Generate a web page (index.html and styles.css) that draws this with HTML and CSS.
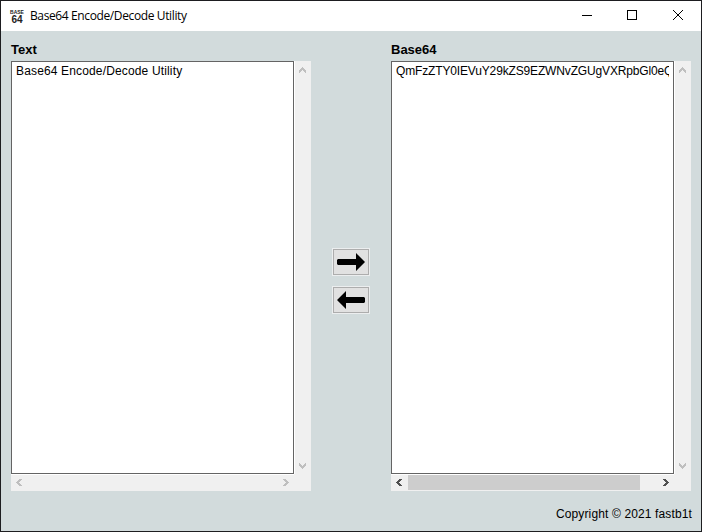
FILE: index.html
```html
<!DOCTYPE html>
<html lang="en">
<head>
<meta charset="utf-8">
<title>Base64 Encode/Decode Utility</title>
<link rel="stylesheet" href="styles.css">
</head>
<body>
<div class="window">
  <header class="titlebar">
    <div class="app-icon"><span class="icon-top">BASE</span><span class="icon-bottom">64</span></div>
    <h1 class="title">Base64 Encode/Decode Utility</h1>
    <svg class="controls" width="102" height="29" viewBox="0 0 102 29" shape-rendering="crispEdges">
      <path d="M0 14.5h10M45.5 9.5h9v9h-9z"/>
      <path class="close" d="M91 9l10 10M101 9l-10 10"/>
    </svg>
  </header>
  <main class="content">
    <section class="pane">
      <h2 class="label">Text</h2>
      <div class="editor">
        <div class="field"><span class="value plain">Base64 Encode/Decode Utility</span></div>
        <div class="vbar">
          <svg class="chev" width="7" height="6" viewBox="0 0 7 6"><path d="M3 0h1v1h1v1h1v1h1v3h-1v-1h-1v-1h-1v-1h-1v1h-1v1h-1v1h-1v-3h1v-1h1v-1h1z"/></svg>
          <svg class="chev" width="7" height="6" viewBox="0 0 7 6"><path d="M3 6h1v-1h1v-1h1v-1h1v-3h-1v1h-1v1h-1v1h-1v-1h-1v-1h-1v-1h-1v3h1v1h1v1h1z"/></svg>
        </div>
        <div class="hbar">
          <svg class="chev" width="6" height="7" viewBox="0 0 6 7"><path d="M0 3v1h1v1h1v1h1v1h3v-1h-1v-1h-1v-1h-1v-1h1v-1h1v-1h1v-1h-3v1h-1v1h-1v1z"/></svg>
          <svg class="chev" width="6" height="7" viewBox="0 0 6 7"><path d="M6 3v1h-1v1h-1v1h-1v1h-3v-1h1v-1h1v-1h1v-1h-1v-1h-1v-1h-1v-1h3v1h1v1h1v1z"/></svg>
        </div>
        <div class="corner"></div>
      </div>
    </section>
    <div class="actions">
      <button class="convert" aria-label="Encode"><svg width="28" height="18" viewBox="0 0 28 18"><path d="M1 6h18V0l9 9-9 9v-6H1l-1-1V7z"/></svg></button>
      <button class="convert" aria-label="Decode"><svg width="28" height="18" viewBox="0 0 28 18"><path d="M27 6H9V0L0 9l9 9v-6h18l1-1V7z"/></svg></button>
    </div>
    <section class="pane">
      <h2 class="label">Base64</h2>
      <div class="editor">
        <div class="field"><span class="value encoded">QmFzZTY0IEVuY29kZS9EZWNvZGUgVXRpbGl0eQ==</span></div>
        <div class="vbar">
          <svg class="chev" width="7" height="6" viewBox="0 0 7 6"><path d="M3 0h1v1h1v1h1v1h1v3h-1v-1h-1v-1h-1v-1h-1v1h-1v1h-1v1h-1v-3h1v-1h1v-1h1z"/></svg>
          <svg class="chev" width="7" height="6" viewBox="0 0 7 6"><path d="M3 6h1v-1h1v-1h1v-1h1v-3h-1v1h-1v1h-1v1h-1v-1h-1v-1h-1v-1h-1v3h1v1h1v1h1z"/></svg>
        </div>
        <div class="hbar active">
          <svg class="chev" width="6" height="7" viewBox="0 0 6 7"><path d="M0 3v1h1v1h1v1h1v1h3v-1h-1v-1h-1v-1h-1v-1h1v-1h1v-1h1v-1h-3v1h-1v1h-1v1z"/></svg>
          <div class="thumb"></div>
          <svg class="chev" width="6" height="7" viewBox="0 0 6 7"><path d="M6 3v1h-1v1h-1v1h-1v1h-3v-1h1v-1h1v-1h1v-1h-1v-1h-1v-1h-1v-1h3v1h1v1h1v1z"/></svg>
        </div>
        <div class="corner"></div>
      </div>
    </section>
  </main>
  <footer class="copyright">Copyright © 2021 fastb1t</footer>
</div>
</body>
</html>
```
FILE: styles.css
```css
* { box-sizing: border-box; }
body { margin: 0; font-family: "Liberation Sans", Arial, sans-serif; color: #000; }
h1, h2 { margin: 0; }
svg { display: block; }
.window {
  width: 702px; height: 532px; overflow: hidden;
  display: flex; flex-direction: column;
  border: 1px solid #1d1d20; background: #d2dbdc;
}
.titlebar {
  flex: none; height: 30px; padding: 0 17px 0 8px;
  display: flex; align-items: center; background: #fff;
}
.app-icon {
  width: 16px; height: 16px; margin-right: 5px;
  display: flex; flex-direction: column; align-items: center;
  font-weight: bold; color: #222;
}
.icon-top { font-size: 5px; line-height: 5px; margin-top: 2px; }
.icon-bottom { font-size: 10px; line-height: 9px; }
.title {
  flex: 1; font: 400 12px/30px "Open Sans", "Noto Sans", sans-serif;
  letter-spacing: -0.38px; white-space: nowrap;
}
.controls { flex: none; align-self: flex-start; fill: none; stroke: #000; stroke-width: 1; }
.close { shape-rendering: geometricPrecision; }
.content { flex: none; display: flex; padding: 10px 10px 0; }
.pane { width: 300px; }
.label { height: 20px; font-size: 13px; line-height: 17px; font-weight: bold; }
.editor {
  display: grid; grid-template: 413px 16px / 283px 16px; gap: 1px;
  background: #fff;
}
.field {
  min-width: 0; overflow: hidden; padding: 2px 4px;
  border: 1px solid #646464; background: #fff;
}
.value { display: block; overflow: hidden; font-size: 12px; line-height: 15px; white-space: nowrap; }
.plain { letter-spacing: 0.15px; }
.encoded { letter-spacing: -0.15px; }
.vbar, .hbar, .corner { background: #f0f0f0; }
.vbar {
  display: flex; flex-direction: column; justify-content: space-between;
  padding: 6px 5px 5px 4px;
}
.hbar { display: flex; align-items: flex-start; justify-content: space-between; padding: 4px 5px 0; }
.corner { margin: -1px 0 0 -1px; }
.chev { flex: none; fill: #bfbfbf; shape-rendering: crispEdges; }
.active .chev { fill: #505050; }
.thumb { width: 232px; height: 15px; margin: -4px 17px 0 0; background: #cdcdcd; }
.actions {
  width: 80px; padding-top: 207px;
  display: flex; flex-direction: column; align-items: center; gap: 10px;
}
.convert {
  width: 38px; height: 28px; padding: 0;
  display: grid; place-items: center;
  border: 1px solid #eceeef; background: #e1e1e1;
  box-shadow: inset 0 0 0 1px #adadad;
}
.copyright {
  padding: 15px 9px 0 0; text-align: right;
  font-size: 12px; line-height: 17px; letter-spacing: 0.13px;
}
```
